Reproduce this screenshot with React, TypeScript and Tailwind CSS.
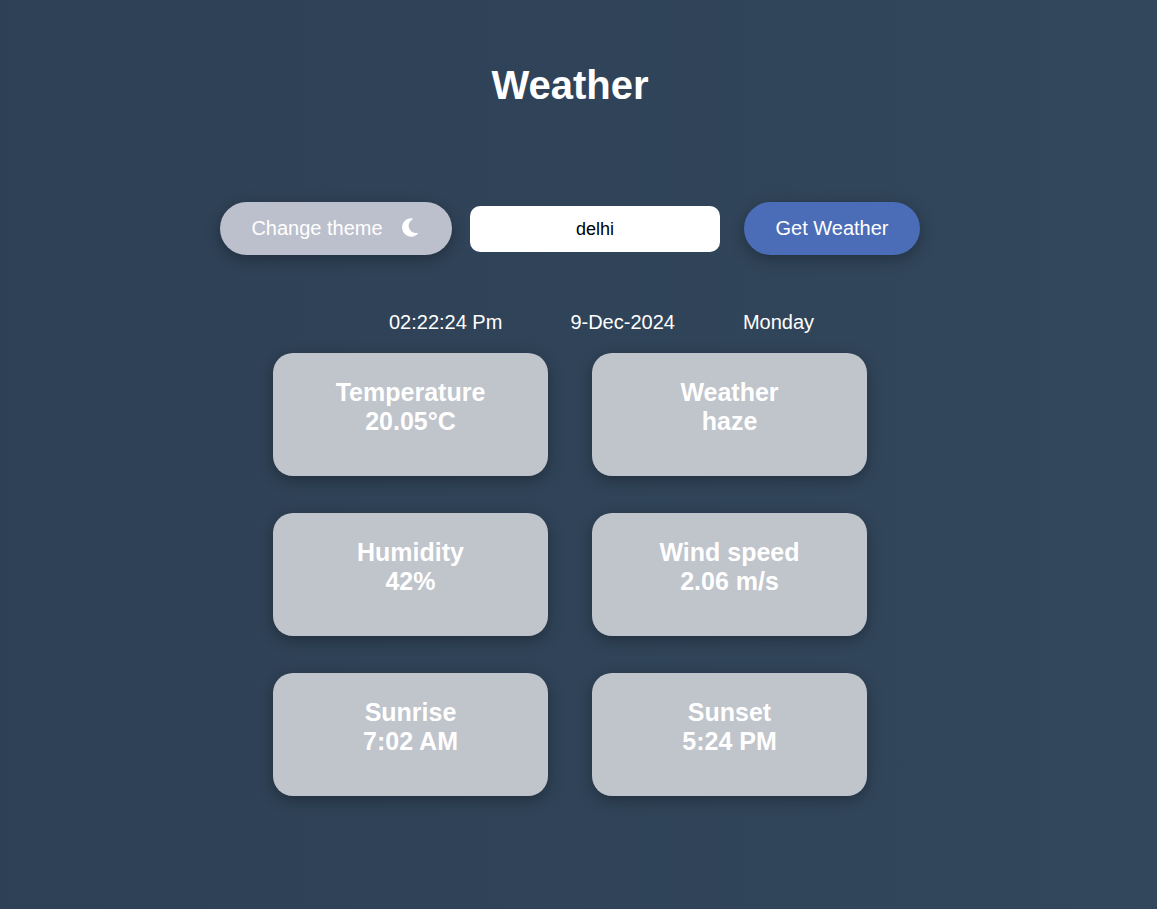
import { useState } from "react";
import { FaMoon } from "react-icons/fa6";

const readings = [
  { label: "Temperature", value: "20.05°C" },
  { label: "Weather", value: "haze" },
  { label: "Humidity", value: "42%" },
  { label: "Wind speed", value: "2.06 m/s" },
  { label: "Sunrise", value: "7:02 AM" },
  { label: "Sunset", value: "5:24 PM" },
];

export default function App() {
  const [city, setCity] = useState("delhi");

  return (
    <div className="min-h-screen bg-linear-to-r from-[#2e4055] to-[#32475c] pr-[17px] pt-[61px] pb-12 font-['Liberation_Sans',Arial,sans-serif] text-white">
      <main className="flex flex-col items-center">
        <h1 className="text-[40px] leading-12 font-bold">Weather</h1>

        <form className="mt-[93px] flex items-center" onSubmit={(e) => e.preventDefault()}>
          <button
            type="button"
            className="flex h-[53px] w-[232px] items-center justify-center gap-[18px] rounded-full bg-[#bcc0cc] pr-0.5 pb-0.5 text-xl shadow-[0_4px_15px_rgba(0,0,0,0.3)]"
          >
            Change theme
            <FaMoon className="h-[21px] w-[18px]" aria-hidden="true" />
          </button>
          <input
            type="text"
            aria-label="City"
            value={city}
            onChange={(e) => setCity(e.target.value)}
            className="ml-[18px] h-[46px] w-[250px] rounded-[10px] bg-white pt-0.5 text-center text-lg text-black outline-none"
          />
          <button
            type="submit"
            className="ml-6 h-[53px] w-44 rounded-full bg-[#4b6cb7] pb-0.5 text-xl shadow-[0_4px_15px_rgba(0,0,0,0.3)]"
          >
            Get Weather
          </button>
        </form>

        <div className="mt-[55px] flex gap-[68px] pl-[63px] text-xl leading-6">
          <span>02:22:24 Pm</span>
          <span>9-Dec-2024</span>
          <span>Monday</span>
        </div>

        <section className="mt-[19px] grid grid-cols-[275px_275px] gap-x-11 gap-y-[37px]">
          {readings.map((reading) => (
            <article
              key={reading.label}
              className="h-[123px] rounded-[20px] bg-[#c0c4cb] pt-[25px] text-center shadow-[0_4px_15px_rgba(0,0,0,0.3)]"
            >
              <h2 className="text-[25px] leading-[29px] font-bold">{reading.label}</h2>
              <p className="text-[25px] leading-[29px] font-bold">{reading.value}</p>
            </article>
          ))}
        </section>
      </main>
    </div>
  );
}
